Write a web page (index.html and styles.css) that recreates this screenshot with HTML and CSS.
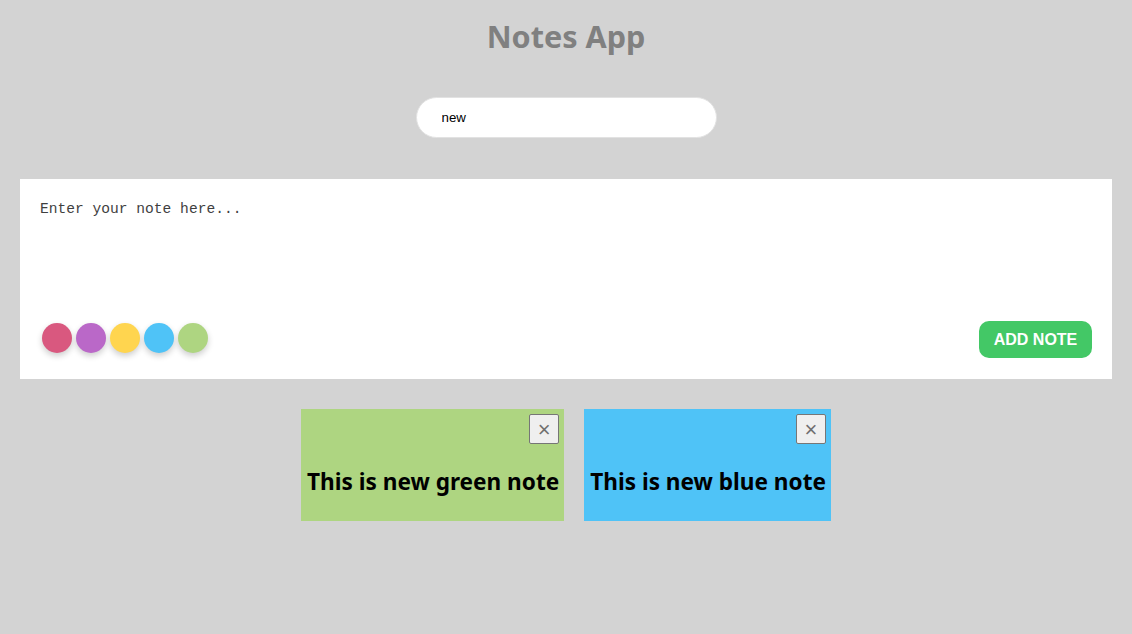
FILE: index.html
```html
<!DOCTYPE html>
<html lang="en">
<head>
<meta charset="utf-8">
<title>Notes App</title>
<link rel="stylesheet" href="styles.css">
</head>
<body>
<h1 class="title">Notes App</h1>
<div class="search-row">
  <input class="search" type="text" value="new">
</div>
<div class="editor">
  <textarea class="note-input" placeholder="Enter your note here..."></textarea>
  <div class="editor-bar">
    <div class="colors">
      <span class="dot pink"></span>
      <span class="dot purple"></span>
      <span class="dot yellow"></span>
      <span class="dot blue"></span>
      <span class="dot green"></span>
    </div>
    <button class="add-btn">ADD NOTE</button>
  </div>
</div>
<div class="notes">
  <div class="note note-green">
    <button class="close">×</button>
    <h2 class="note-text">This is new green note</h2>
  </div>
  <div class="note note-blue">
    <button class="close">×</button>
    <h2 class="note-text">This is new blue note</h2>
  </div>
</div>
</body>
</html>
```
FILE: styles.css
```css
html, body {
  margin: 0;
  padding: 0;
}
body {
  background: #d3d3d3;
  font-family: "Segoe UI", "Noto Sans", "Open Sans", sans-serif;
  min-height: 634px;
}
.title {
  margin: 0;
  padding-top: 14px;
  height: 46px;
  text-align: center;
  font-size: 30.6px;
  line-height: 44px;
  color: #808080;
  font-weight: 700;
}
.search-row {
  display: flex;
  justify-content: center;
  margin-top: 37px;
}
.search {
  width: 301px;
  height: 41px;
  box-sizing: border-box;
  border: 1px solid #e2e2e2;
  border-radius: 21px;
  padding: 0 25px;
  font-family: "Liberation Sans", Arial, sans-serif;
  font-size: 13.3px;
  color: #000;
  outline: none;
}
.editor {
  margin: 41px 20px 0;
  height: 200px;
  background: #fff;
  box-sizing: border-box;
  display: flex;
  flex-direction: column;
}
.note-input {
  box-sizing: border-box;
  border: none;
  resize: none;
  outline: none;
  height: 130px;
  padding: 20px 20px 0;
  font-family: "Liberation Mono", monospace;
  font-size: 14.6px;
  line-height: 20px;
  color: #333;
  background: transparent;
}
.note-input::placeholder {
  color: #3f3f3f;
}
.editor-bar {
  display: flex;
  justify-content: space-between;
  align-items: center;
  padding: 0 20px 0 22px;
  margin-top: 12px;
}
.colors {
  display: flex;
  gap: 4px;
  margin-bottom: 3px;
}
.dot {
  width: 30px;
  height: 30px;
  border-radius: 50%;
  box-shadow: 0 3px 6px rgba(0, 0, 0, 0.2);
}
.pink { background: #d9587f; }
.purple { background: #ba68c8; }
.yellow { background: #ffd54f; }
.blue { background: #4fc3f7; }
.green { background: #aed581; }
.add-btn {
  width: 113px;
  height: 37px;
  border: none;
  border-radius: 10px;
  background: #43c866;
  color: #fff;
  font-family: "Liberation Sans", Arial, sans-serif;
  font-weight: 700;
  font-size: 16px;
  padding: 0;
}
.notes {
  display: flex;
  justify-content: center;
  gap: 20px;
  margin-top: 30px;
}
.note {
  height: 112px;
  box-sizing: border-box;
  padding: 5px 5px 0 6px;
  display: flex;
  flex-direction: column;
  align-items: flex-end;
}
.note-green { background: #aed581; }
.note-blue { background: #4fc3f7; }
.close {
  width: 30px;
  height: 30px;
  border: 1px solid #767676;
  border-radius: 2px;
  background: #efefef;
  color: #707070;
  font-size: 22px;
  line-height: 22px;
  padding: 2px 0 0;
  font-family: "Liberation Sans", Arial, sans-serif;
}
.note-text {
  margin: 21px 0 0;
  font-size: 22.6px;
  line-height: 34px;
  font-weight: 700;
  color: #000;
  white-space: nowrap;
}
```
